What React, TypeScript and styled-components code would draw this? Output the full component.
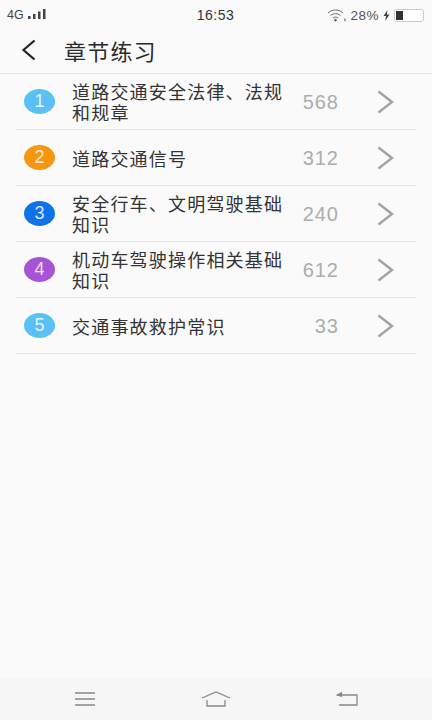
import styled, { createGlobalStyle } from 'styled-components'

const chapters = [
	{ id: 1, title: '道路交通安全法律、法规和规章', count: 568, color: '#5ac0f5' },
	{ id: 2, title: '道路交通信号', count: 312, color: '#f7960f' },
	{ id: 3, title: '安全行车、文明驾驶基础知识', count: 240, color: '#0f72e8' },
	{ id: 4, title: '机动车驾驶操作相关基础知识', count: 612, color: '#a653d6' },
	{ id: 5, title: '交通事故救护常识', count: 33, color: '#5ac0f5' },
]

const App = () => {
	return (
		<>
			<GlobalStyle />
			<Screen>
				<StatusBar>
					<StatusLeft>
						<span>4G</span>
						<svg width='18' height='11' viewBox='0 0 18 11'>
							<rect x='0' y='7' width='2.5' height='3' fill='#444' />
							<rect x='5' y='5' width='2.5' height='5' fill='#444' />
							<rect x='10' y='2.5' width='2.5' height='7.5' fill='#444' />
							<rect x='15' y='0' width='2.5' height='10' fill='#444' />
						</svg>
					</StatusLeft>
					<Clock>16:53</Clock>
					<StatusRight>
						<svg width='19' height='13' viewBox='0 0 19 13' fill='none' stroke='#666' strokeWidth='1'>
							<path d='M1 4 C5 0 12 0 16 4' />
							<path d='M3.5 6.5 C6.5 4 10.5 4 13.5 6.5' />
							<path d='M6 9 C7.5 7.8 9.5 7.8 11 9' />
							<circle cx='8.5' cy='11.2' r='0.9' fill='#555' />
							<rect x='17.4' y='9.6' width='1' height='2.6' fill='#555' stroke='none' />
						</svg>
						<Percent>28%</Percent>
						<svg width='7' height='11' viewBox='0 0 7 11'>
							<path d='M4.5 0 L0.5 6 L3 6 L2.2 11 L6.5 4.5 L3.8 4.5 Z' fill='#444' />
						</svg>
						<Battery>
							<BatteryLevel />
						</Battery>
					</StatusRight>
				</StatusBar>

				<Header>
					<svg width='16' height='22' viewBox='0 0 16 22' fill='none' stroke='#222' strokeWidth='2.2'>
						<path d='M13.5 1.5 L2.5 11 L13.5 20.5' />
					</svg>
					<Title>章节练习</Title>
				</Header>

				<List>
					{chapters.map(item => (
						<Row key={item.id}>
							<Badge $color={item.color}>{item.id}</Badge>
							<RowTitle>{item.title}</RowTitle>
							<Count>{item.count}</Count>
							<svg width='17' height='24' viewBox='0 0 17 24' fill='none' stroke='#a3a3a3' strokeWidth='2.4'>
								<path d='M1.5 1.5 L15 12 L1.5 22.5' />
							</svg>
						</Row>
					))}
				</List>

				<NavBar>
					<svg width='20' height='14' viewBox='0 0 20 14' fill='none' stroke='#888' strokeWidth='1.3'>
						<path d='M0 1 H20 M0 7 H20 M0 13 H20' />
					</svg>
					<svg width='30' height='16' viewBox='0 0 30 16' fill='none' stroke='#888' strokeWidth='1.3'>
						<path d='M1 7 L15 1 L29 7' />
						<path d='M6 9 V15 H24 V9' />
					</svg>
					<svg width='22' height='14' viewBox='0 0 22 14' fill='none' stroke='#888' strokeWidth='1.3'>
						<path d='M1 3 H21 V13 H3' />
						<path d='M6 0.5 L1.5 3 L6 4.5' fill='#888' />
					</svg>
				</NavBar>
			</Screen>
		</>
	)
}

export default App

const GlobalStyle = createGlobalStyle`
	html, body {
		margin: 0;
		padding: 0;
		background: #fafafa;
	}
`

const Screen = styled.div`
	width: 432px;
	height: 720px;
	display: flex;
	flex-direction: column;
	background: #fafafa;
	font-family: 'Liberation Sans', 'Noto Sans CJK SC', sans-serif;
	overflow: hidden;
`

const StatusBar = styled.div`
	height: 30px;
	flex-shrink: 0;
	display: grid;
	grid-template-columns: 1fr auto 1fr;
	align-items: center;
	padding: 0 8px 0 7px;
	color: #444;
`

const StatusLeft = styled.div`
	display: flex;
	align-items: center;
	gap: 4px;
	font-size: 12.5px;
	svg {
		margin-bottom: 2px;
	}
`

const Clock = styled.div`
	font-size: 14px;
	letter-spacing: 0.5px;
	color: #333;
`

const StatusRight = styled.div`
	display: flex;
	align-items: center;
	justify-content: flex-end;
	gap: 4px;
`

const Percent = styled.span`
	font-size: 13.5px;
	letter-spacing: 0.5px;
	color: #555;
`

const Battery = styled.div`
	width: 26px;
	height: 9px;
	border: 1px solid #ccc;
	border-radius: 3px;
	padding: 1px;
	background: #fff;
`

const BatteryLevel = styled.div`
	width: 7px;
	height: 100%;
	background: #333;
`

const Header = styled.div`
	height: 44px;
	flex-shrink: 0;
	box-sizing: border-box;
	display: flex;
	align-items: center;
	gap: 27px;
	padding: 0 0 3px 21px;
	border-bottom: 1px solid #e8e8e8;
`

const Title = styled.h1`
	margin: 0;
	font-size: 22px;
	font-weight: 400;
	letter-spacing: 1.2px;
	color: #2a2a2a;
`

const List = styled.div`
	flex: 1;
	display: flex;
	flex-direction: column;
	padding: 0 16px;
`

const Row = styled.div`
	height: 56px;
	flex-shrink: 0;
	box-sizing: border-box;
	display: flex;
	align-items: center;
	padding: 0 22px 0 8px;
	border-bottom: 1px solid #e6e6e6;
`

const Badge = styled.div<{ $color: string }>`
	width: 31px;
	height: 25px;
	flex-shrink: 0;
	display: flex;
	align-items: center;
	justify-content: center;
	border-radius: 50%;
	background: ${props => props.$color};
	color: rgba(255, 255, 255, 0.85);
	font-size: 18px;
`

const RowTitle = styled.div`
	width: 216px;
	margin-left: 17px;
	padding-top: 5px;
	font-size: 18px;
	line-height: 21px;
	letter-spacing: 1.2px;
	color: #333;
`

const Count = styled.div`
	flex: 1;
	text-align: right;
	margin-right: 38px;
	padding-top: 2px;
	font-size: 20px;
	letter-spacing: 1px;
	color: #adadad;
`

const NavBar = styled.div`
	height: 42px;
	flex-shrink: 0;
	display: flex;
	align-items: center;
	justify-content: space-between;
	padding: 0 74px 0 75px;
	background: #f6f6f6;
`
